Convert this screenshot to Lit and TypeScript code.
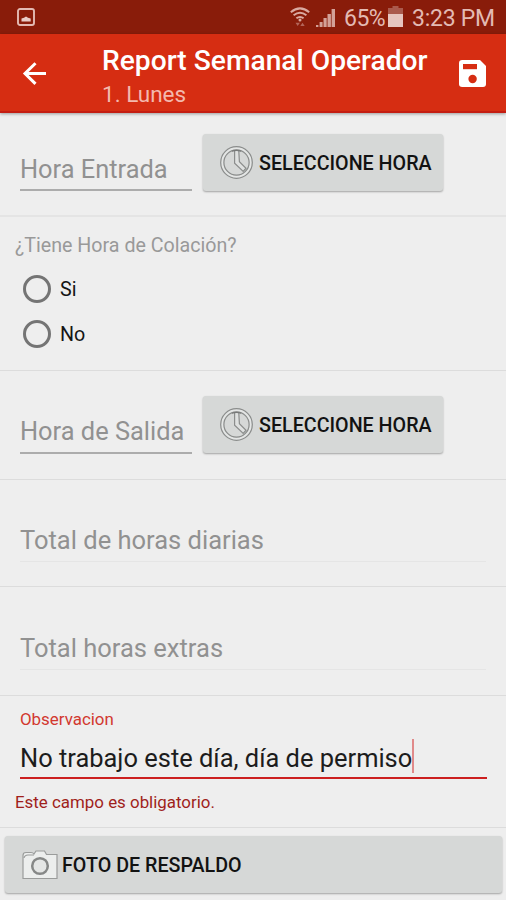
import { LitElement, html, css, svg } from "lit";
import { customElement, property } from "lit/decorators.js";

@customElement("status-bar")
class StatusBar extends LitElement {
  static styles = css`
    :host { display: flex; height: 34px; background: #891c0a; color: #e3bab3; font-size: 23px; line-height: 37px; box-sizing: border-box; padding: 0 11px 0 17px; }
    .pic { margin-top: 8px; width: 18px; height: 18px; }
    .wifi { margin: 7px 6px 0 auto; width: 20px; height: 20px; }
    .signal { margin: 9px 9px 0 0; width: 19px; height: 18px; }
    .pct { width: 44px; letter-spacing: -0.5px; white-space: nowrap; }
    .battery { width: 15px; height: 22px; margin: 6px 9px 0 0; }
    .time { width: 83px; white-space: nowrap; letter-spacing: -0.25px; }
    svg { display: block; flex: none; }
  `;
  render() {
    return html`
      <svg class="pic" viewBox="0 0 18 18">
        <rect x="1" y="1" width="16" height="16" rx="2" fill="none" stroke="#e3bab3" stroke-width="1.9" />
        <path d="M4.5 13.5v-3l2.5-.8 2-1.2 2 1.200 2.700.8v3z" fill="#e9cbc6" />
      </svg>
      <svg class="wifi" viewBox="0 0 20 20" fill="none" stroke="#d9a9a0" stroke-width="2">
        <path d="M.8 5.2q9.2-7.6 18.4 0M3.6 8.3q6.4-5 12.8 0M6.4 11.2q3.6-2.6 7.2 0" />
        <circle cx="10" cy="13" r="1.5" fill="#d9a9a0" stroke="none" />
        <path d="M5.5 15.8l2.2 3.2 2.2-3.2zM10.3 19l2.2-3.2 2.2 3.2z" fill="#b3655a" stroke="none" />
      </svg>
      <svg class="signal" viewBox="0 0 19 18" fill="#d3a198">
        <path d="M0 16h2.4v2H0zM3.6 13h3v5h-3zM7.5 9h3.2v9H7.5zM11.5 5h3.4v13h-3.4zM15.6 0H19v18h-3.4z" />
      </svg>
      <span class="pct">65%</span>
      <svg class="battery" viewBox="0 0 15 22">
        <path d="M4.5 0h6v2H15v7H0V2h4.5z" fill="#aa5a4d" />
        <path d="M0 8h15v13H0z" fill="#e6c5bf" />
      </svg>
      <span class="time">3:23 PM</span>
    `;
  }
}

@customElement("tool-bar")
class ToolBar extends LitElement {
  static styles = css`
    :host { display: flex; height: 79px; background: #d62d12; box-sizing: border-box; border-bottom: 2px solid #c41d12; color: #fff; padding-left: 22px; position: relative; box-shadow: 0 1px 3px rgba(0, 0, 0, 0.35); }
    svg { display: block; flex: none; }
    .back { width: 26px; height: 26px; margin-top: 27px; }
    .titles { margin: 11px 0 0 54px; width: 340px; white-space: nowrap; }
    .title { font-size: 28.2px; line-height: 32px; font-weight: 500; }
    .sub { font-size: 22.5px; line-height: 28px; margin-top: 3px; color: #f3b9ae; }
    .save { width: 27px; height: 27px; margin: 26px 0 0 17px; }
  `;
  render() {
    return html`
      <svg class="back" viewBox="0 0 26 26" fill="none" stroke="#fff" stroke-width="3">
        <path d="M24 12.5H3.2M13.5 2.200L3 12.500l10.500 10.400" />
      </svg>
      <div class="titles">
        <div class="title">Report Semanal Operador</div>
        <div class="sub">1. Lunes</div>
      </div>
      <svg class="save" viewBox="0 0 27 27">
        <path d="M3.2 0H21l6 6v18q0 3-3 3H3.2Q0 27 0 24V3Q0 0 3.2 0z" fill="#fff" />
        <path d="M4 4h14v5.2H4z" fill="#d62d12" />
        <circle cx="13.6" cy="19" r="4.2" fill="#d62d12" />
      </svg>
    `;
  }
}

const clock = svg`
  <circle cx="16.5" cy="16.5" r="14.3" stroke="#e4e6e5" stroke-width="2.2" />
  <circle cx="16.5" cy="16.5" r="15.8" />
  <circle cx="16.5" cy="16.5" r="12.6" />
  <path d="M14.6 5v12.2l8.600 8.200 2.800-3.200-6.600-6.400-.6-10.800" fill="#dfe1e0" />
  <path d="M12 5.2q4.5-1.6 9 0" stroke="#777978" />`;

const camera = svg`
  <path d="M1 28.5V5.5q0-3 3-3h5q2 0 3 1.500L14 1h8.500l2 3.500H35v24z" fill="#eceeed" stroke="#9a9c9b" stroke-width="1.2" />
  <path d="M2 8q.5-3 4-3h6" stroke="#9a9c9b" stroke-width="1.2" />
  <circle cx="18" cy="16" r="7.8" fill="#e4e6e5" stroke="#868887" stroke-width="2.5" />`;

@customElement("raised-button")
class RaisedButton extends LitElement {
  @property() kind = "clock";
  @property() label = "";
  static styles = css`
    :host { display: block; }
    .btn { display: flex; width: 100%; height: 57px; align-items: center; box-sizing: border-box; border: 0; border-radius: 3px; background: #d6d8d7; box-shadow: 0 1px 2px rgba(0, 0, 0, 0.32); padding: 0 0 0 17px; font: 500 19.7px/24px Roboto, sans-serif; color: #121212; white-space: nowrap; }
    svg { flex: none; display: block; }
    span { padding-top: 2px; }
    .clock { width: 33px; height: 33px; margin-right: 6px; }
    .camera { width: 36px; height: 30px; margin-right: 4px; }
  `;
  render() {
    const cam = this.kind === "camera";
    return html`<button class="btn">
      ${cam
        ? html`<svg class="camera" viewBox="0 0 36 30" fill="none">${camera}</svg>`
        : html`<svg class="clock" viewBox="0 0 33 33" fill="none" stroke="#8b8d8c" stroke-width="1.2">${clock}</svg>`}
      <span>${this.label}</span>
    </button>`;
  }
}

@customElement("app-root")
class AppRoot extends LitElement {
  static styles = css`
    :host { display: block; width: 506px; height: 900px; overflow: hidden; background: #eee; font-family: Roboto, sans-serif; }
    .row { display: flex; box-sizing: border-box; border-bottom: 1px solid #dcdcdc; white-space: nowrap; }
    .col { flex-direction: column; }
    .time { padding-left: 20px; gap: 11px; }
    .r1 { height: 104px; padding-top: 21px; border-bottom: 2px solid #e4e4e4; }
    .r2 { height: 154px; padding: 17px 0 0 15px; }
    .r3 { height: 109px; padding-top: 25px; }
    .r4 { height: 107px; padding: 45px 20px 0; }
    .r5 { height: 109px; padding: 46px 20px 0; }
    .r6 { height: 132px; padding: 13px 19px 0 20px; }
    .r7 { padding: 8px 4px 0 5px; border: 0; }
    .field { width: 172px; height: 57px; box-sizing: border-box; border-bottom: 2px solid #acacac; font-size: 25.4px; line-height: 30px; padding-top: 20px; color: #919191; }
    .r3 .field { height: 58px; }
    .wide { height: 29px; width: 466px; padding-top: 0; box-sizing: content-box; padding-bottom: 7px; border-bottom: 1px solid #e5e5e5; font-size: 25.5px; }
    .sel { width: 240px; }
    .q { font-size: 19.65px; line-height: 24px; color: #999; }
    .opt { display: flex; align-items: center; gap: 9px; height: 28px; margin: 17px 0 0 8px; font-size: 19.7px; color: #151515; }
    .ring { width: 28px; height: 28px; box-sizing: border-box; border: 3px solid #747474; border-radius: 50%; }
    .label { font-size: 16.9px; line-height: 20px; color: #d2382f; }
    .input { display: flex; font-size: 25.45px; line-height: 30px; height: 39px; border-bottom: 2px solid #cc1f1f; margin-top: 9px; color: #1c1c1c; }
    .input span { padding-top: 5px; }
    .caret { width: 2px; height: 34px; margin-top: 1px; background: #e08a8a; }
    .error { font-size: 16.9px; line-height: 20px; margin: 13px 0 0 -5px; color: #a01f1b; }
  `;
  render() {
    return html`
      <status-bar></status-bar>
      <tool-bar></tool-bar>
      <section class="row time r1">
        <div class="field">Hora Entrada</div>
        <raised-button class="sel" label="SELECCIONE HORA"></raised-button>
      </section>
      <section class="row col r2">
        <div class="q">¿Tiene Hora de Colación?</div>
        ${["Si", "No"].map((t) => html`<label class="opt"><i class="ring"></i>${t}</label>`)}
      </section>
      <section class="row time r3">
        <div class="field">Hora de Salida</div>
        <raised-button class="sel" label="SELECCIONE HORA"></raised-button>
      </section>
      <section class="row r4"><div class="field wide">Total de horas diarias</div></section>
      <section class="row r5"><div class="field wide">Total horas extras</div></section>
      <section class="row col r6">
        <div class="label">Observacion</div>
        <div class="input"><span>No trabajo este día, día de permiso</span><i class="caret"></i></div>
        <div class="error">Este campo es obligatorio.</div>
      </section>
      <section class="row col r7"><raised-button kind="camera" label="FOTO DE RESPALDO"></raised-button></section>
    `;
  }
}
